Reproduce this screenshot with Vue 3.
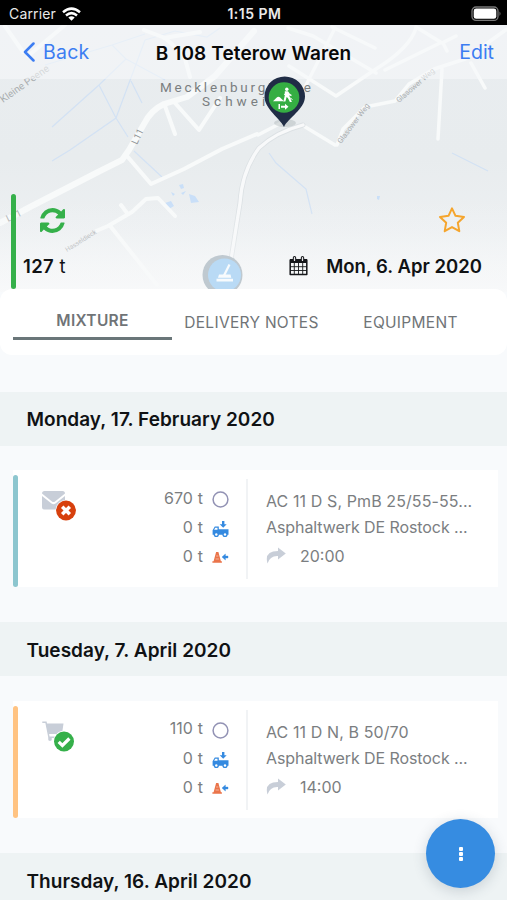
<script setup>
const days = [
  {
    title: 'Monday, 17. February 2020',
    card: { tone: 'teal', icon: 'mail', planned: '670 t', mix: 'AC 11 D S, PmB 25/55-55...', plant: 'Asphaltwerk DE Rostock ...', time: '20:00' },
  },
  {
    title: 'Tuesday, 7. April 2020',
    card: { tone: 'orange', icon: 'cart', planned: '110 t', mix: 'AC 11 D N, B 50/70', plant: 'Asphaltwerk DE Rostock ...', time: '14:00' },
  },
  { title: 'Thursday, 16. April 2020' },
]
</script>

<template>
  <div class="screen">
    <header class="status">
      <div class="carrier">
        <span>Carrier</span>
        <svg width="19" height="14" viewBox="0 0 19 14" fill="none" stroke="#fff" stroke-width="2.5">
          <path d="M1 5.2Q9.5-2 18 5.2" /><path d="M4 8.5Q9.5 3.8 15 8.5" />
          <path d="M6.3 10.6Q9.5 8 12.7 10.6L9.5 13.8Z" fill="#fff" stroke="none" />
        </svg>
      </div>
      <span class="clock">1:15 PM</span>
      <svg class="battery" width="31" height="16" viewBox="0 0 31 16">
        <rect x="1" y="1" width="26" height="13.4" rx="4" fill="none" stroke="#777" stroke-width="1.3" />
        <rect x="2.7" y="2.6" width="22.6" height="10.2" rx="2.4" fill="#fff" />
        <path d="M28.5 5.5q2 2.2 0 4.4z" fill="#777" />
      </svg>
    </header>

    <section class="hero">
      <svg class="map" width="507" height="267" viewBox="0 25 507 267">
        <defs>
          <linearGradient id="land" x1="0" y1="0" x2="0" y2="1">
            <stop offset="0" stop-color="#e9edf0" /><stop offset=".5" stop-color="#e8ecee" />
            <stop offset=".78" stop-color="#edf0f2" /><stop offset="1" stop-color="#f7f8f9" />
          </linearGradient>
          <linearGradient id="mist" x1="0" y1="0" x2="0" y2="1">
            <stop offset="0" stop-color="#f5f7f8" stop-opacity="0" /><stop offset="1" stop-color="#f8f9fa" stop-opacity=".6" />
          </linearGradient>
        </defs>
        <rect y="25" width="507" height="267" fill="url(#land)" />
        <g fill="none" stroke="#d3e2f4" stroke-width="1.200">
          <path d="M45 65L112 45L145 34M112 45L126 59L99 85L52 127M126 59L165 80M145 40L132 75L116 118L70 150L52 161M99 85L116 118L128 137M131 81L142 103M145 40L175 31L207 37L220 28" />
          <path d="M134 151L162 177M269 153L276 163L306 189L312 214M452 153L488 171" />
        </g>
        <g fill="#c9dff8">
          <path d="M165 203l6-2 3 5-5 3zM189 194l6 2 4 6-8 1zM179 185l4-1 1 4-3 1zM171 192l4 2-2 2zM181 193l5-2-3 4zM377 196l3 0-1 4-2-1z" />
        </g>
        <g fill="none" stroke="#f8fafa" stroke-linejoin="round" stroke-linecap="round">
          <path stroke-width="6" d="M0 223L30 207L100 171L122 160L129 150L144 124Q151 110 164 104L187 97L215 76L254 31" />
          <path stroke-width="4" d="M127 156L151 184L184 169L222 149L257 134M165 106L175 134M175 103L199 130L220 98M144 30L165 38L184 55L190 77M164 38L200 32M5 26L23 52M28 56L65 25" />
          <path stroke-width="4" d="M96 231L108 226L132 212L146 199L158 198L175 216M127 213L121 205M111 227L157 285" />
          <path stroke-width="3.500" d="M288 28L313 36L376 73M332 27L375 48M289 66L336 96L376 69Q410 48 416 28M385 70L440 43M416 27L442 43L456 36M443 43L447 51M337 145L343 129L365 107L395 101L409 84L434 69L465 59L507 29M442 69L438 139M471 63L485 88M258 135L281 123M302 125L335 145" />
        </g>
        <g fill="none" stroke-linecap="round">
          <path stroke="#dce1e4" stroke-width="5" d="M230 266L240 203Q242 171 259 148Q276 132 303 125" />
          <path stroke="#f8f9fa" stroke-width="3.300" d="M230 266L240 203Q242 171 259 148Q276 132 303 125M303 91L335 28" />
        </g>
        <g class="road-label">
          <text x="3" y="103" transform="rotate(-35 3 103)" font-size="10">Kleine Peene</text>
          <text x="137" y="145" transform="rotate(-65 137 145)" font-size="9.500" fill="#8e9294">L11</text>
          <text x="8" y="222" transform="rotate(-26 8 222)" font-size="9.500">L11</text>
          <text x="341" y="144" transform="rotate(-53 341 144)" font-size="7.500">Glasower Weg</text>
          <text x="399" y="103" transform="rotate(-41 399 103)" font-size="7.500">Glasower Weg</text>
          <text x="67" y="252" transform="rotate(-32 67 252)" font-size="6.500">Hasseldieck</text>
        </g>
        <rect y="200" width="507" height="92" fill="url(#mist)" />
        <g class="region"><text x="160" y="91.500" textLength="151">Mecklenburgische</text><text x="202" y="106" textLength="74">Schweiz</text></g>
        <rect y="25" width="507" height="54" fill="#f7f8fa" opacity=".58" />
        <ellipse cx="285" cy="123" rx="11" ry="4" fill="#8a9298" opacity=".28" />
        <path d="M284 127C280 118 264.500 109 264.500 96.500A20 19.800 0 0 1 305 96.500C305 109 288 118 284 127Z" fill="#202d46" />
        <circle cx="284" cy="97.500" r="15.300" fill="#35ae43" />
        <g fill="#fff">
          <path d="M273 101.300l3.500-3.600q1.700-1.500 3.400-.4l4 4z" />
          <circle cx="286.800" cy="89.300" r="1.700" />
          <path d="M284.800 91.300h3.200l1.800 2.500 2 1.200-.7 1.200-1.800-.9.600 2.300 2 4.300h-2l-2-3.800-1.300-1-1.200 4.500h-2l1.400-6z" />
          <path d="M284 94l8.500 5.500" stroke="#fff" stroke-width="1" />
          <path d="M278.500 104h1.500v5h-1.500zM281 105.700h4v-2l3.500 3-3.500 3v-2h-4z" />
        </g>
        <circle cx="222.500" cy="275" r="20" fill="#bfc9d0" />
        <circle cx="224.500" cy="275" r="16.500" fill="#b9daf5" />
        <path d="M229.500 264.500L224 275.500" stroke="#f8fbfd" stroke-width="2.200" />
        <path d="M219 274.500h11.500l.8 3.300H218zM216.500 278.800h16.500v2.700h-16.500z" fill="#f8fbfd" />
      </svg>

      <nav class="nav">
        <a class="back"><svg width="12" height="20" viewBox="0 0 12 20"><path d="M10.500 1.500L2 10l8.500 8.500" fill="none" stroke="#3c7df2" stroke-width="2.500" stroke-linecap="round" stroke-linejoin="round" /></svg><span>Back</span></a>
        <h1>B 108 Teterow Waren</h1>
        <a class="edit">Edit</a>
      </nav>

      <div class="summary">
        <div class="summary-row">
          <svg width="25" height="25" viewBox="0 0 1536 1536" fill="#35b04a"><path d="M1511 928q0 5-1 7-64 268-268 434.500T764 1536q-146 0-282.500-55T238 1324l-129 129q-19 19-45 19t-45-19T0 1408V960q0-26 19-45t45-19h448q26 0 45 19t19 45-19 45l-137 137q71 66 161 102t187 36q134 0 250-65t186-179q11-17 53-117 8-23 30-23h192q13 0 22.500 9.500t9.500 22.500zm25-800v448q0 26-19 45t-45 19h-448q-26 0-45-19t-19-45 19-45l138-138Q969 256 768 256q-134 0-250 65T332 500q-11 17-53 117-8 23-30 23H50q-13 0-22.500-9.500T18 608v-7q65-268 270-434.500T768 0q146 0 284 55.500T1297 212l130-129q19-19 45-19t45 19 19 45z" /></svg>
          <svg width="28" height="28" viewBox="0 0 28 28"><path d="M14 2.300l3.500 7.500 8.500 1.100-6.200 5.800 1.500 8.500-7.300-4.100-7.300 4.100 1.500-8.500L2 10.900l8.500-1.100z" fill="none" stroke="#f5a52d" stroke-width="2" stroke-linejoin="round" /></svg>
        </div>
        <div class="summary-row facts">
          <span class="amount"><b>127</b> t</span>
          <span class="date">
            <svg width="19" height="20" viewBox="0 0 19 20"><path d="M1.200 4h16.600v14.500H1.200z" fill="none" stroke="#15171a" stroke-width="1.500" stroke-linejoin="round" /><path d="M1 3h17v4H1z" fill="#15171a" /><path d="M5.300 7v11M9.500 7v11M13.700 7v11M1 10.700h17M1 14.500h17" stroke="#15171a" stroke-width=".9" /><path d="M5.500 1.700v2.600M13.500 1.700v2.600" stroke="#15171a" stroke-width="3.400" stroke-linecap="round" /><path d="M5.500 1.700v2.700M13.500 1.700v2.700" stroke="#e8eaec" stroke-width="1.300" stroke-linecap="round" /></svg>
            <b>Mon, 6. Apr 2020</b>
          </span>
        </div>
      </div>
    </section>

    <div class="tabs">
      <span class="tab active">MIXTURE</span><span class="tab">DELIVERY NOTES</span><span class="tab">EQUIPMENT</span>
    </div>

    <main class="list">
      <section v-for="day in days" :key="day.title" class="day">
        <h2>{{ day.title }}</h2>
        <article v-if="day.card" class="card" :class="day.card.tone">
          <div class="state">
            <svg v-if="day.card.icon === 'mail'" width="38" height="34" viewBox="0 0 38 34">
              <path d="M1 3.500Q1 1 3.500 1h18Q24 1 24 3.500L14 11.500q-1.500 1-3 0z" fill="#c8ced8" />
              <path d="M1 6l9.500 7.500q2 1.500 4 0L24 6v11q0 2.500-2.500 2.500h-18Q1 19.500 1 17z" fill="#c8ced8" />
              <circle cx="25" cy="20.500" r="10.500" fill="#fff" /><circle cx="25" cy="20.500" r="9.900" fill="#d7400d" />
              <path d="M21.200 16.700l7.600 7.600M28.800 16.700l-7.600 7.600" stroke="#fff" stroke-width="3.500" />
            </svg>
            <svg v-else width="38" height="34" viewBox="0 0 38 34">
              <path d="M1.300 1.300H5l3 15h12" fill="none" stroke="#c8ced8" stroke-width="1.500" /><path d="M5 2.500h17.500L21 13H7.500z" fill="#c8ced8" />
              <circle cx="9" cy="18" r="1.900" fill="#c8ced8" />
              <circle cx="23" cy="20.500" r="10.700" fill="#fff" /><circle cx="23" cy="20.500" r="10" fill="#35b04a" />
              <path d="M17.700 20.800l3.700 3.700 7-7" fill="none" stroke="#fff" stroke-width="3.200" />
            </svg>
          </div>
          <div class="amounts">
            <div><span>{{ day.card.planned }}</span><svg class="planned-icon" width="17" height="17" viewBox="0 0 17 17"><circle cx="8.500" cy="8.500" r="7.400" fill="none" stroke="#9292b4" stroke-width="1.500" /></svg></div>
            <div><span>0 t</span><svg class="truck-icon" width="17" height="18" viewBox="0 0 17 18" fill="#358ae0"><path d="M10 1h2.400v3.200h2.300L11.200 7.800 7.700 4.200H10z" /><path d="M.6 10.300L2.800 6.500h4v2.700h9.700v5.600H.6z" /><path d="M3.300 7.700h2.200v2H2.100z" fill="#fff" /><circle cx="4.300" cy="14.500" r="2.600" /><circle cx="13" cy="14.500" r="2.600" /><circle cx="4.300" cy="14.500" r="1.200" fill="#fff" /><circle cx="13" cy="14.500" r="1.200" fill="#fff" /></svg></div>
            <div><span>0 t</span><svg class="cone-icon" width="17" height="14" viewBox="0 0 17 14"><path d="M4.100 1h2.300l2.500 9.200h1v1.500H.4v-1.500h1.200z" fill="#ea744a" /><path d="M4.200 5h2.100M3.600 8h3.300" stroke="#f6bda6" stroke-width=".9" /><path d="M10 6l3.400-3v2.100H16v1.900h-2.600v2z" fill="#358ae0" stroke="#358ae0" stroke-width=".4" /></svg></div>
          </div>
          <div class="details">
            <p class="mix">{{ day.card.mix }}</p>
            <p class="plant">{{ day.card.plant }}</p>
            <p class="time"><svg width="20" height="18" viewBox="0 0 20 18"><path d="M12 .5L19.800 6.500 12 12.500V9Q4 8.500 1.500 16.500Q-2 4 12 4z" fill="#c8ced8" /></svg><span>{{ day.card.time }}</span></p>
          </div>
        </article>
      </section>
    </main>

    <button class="fab" aria-label="More"><i></i><i></i><i></i></button>
  </div>
</template>

<style>
body { margin: 0; overflow: hidden; }
</style>

<style scoped>
* { box-sizing: border-box; }
.screen { position: relative; display: flex; flex-direction: column; width: 507px; height: 900px; overflow: hidden; background: #f8fafc; font-family: Inter, "Liberation Sans", sans-serif; color: #101214; }
.status { display: grid; grid-template-columns: 1fr auto 1fr; align-items: center; flex: 0 0 25px; padding: 2px 7px 0 9px; background: #000; color: #e9e9e9; font-size: 14px; }
.carrier { display: flex; align-items: center; gap: 6px; letter-spacing: .15px; }
.clock { font-weight: 600; font-size: 14px; letter-spacing: .5px; }
.battery { justify-self: end; margin-right: -2px; }
.hero { position: relative; display: flex; flex-direction: column; justify-content: space-between; flex: 0 0 264px; }
.map { position: absolute; top: 0; left: 0; }
.road-label { fill: #a8acae; font-family: Roboto, sans-serif; }
.region { fill: #7a7e80; font-family: Roboto, sans-serif; font-size: 13.500px; }
.nav { position: relative; display: grid; grid-template-columns: 1fr auto 1fr; align-items: center; height: 54px; padding: 0 13px; }
.nav h1 { margin: 0; padding-top: 2px; font-size: 19px; font-weight: 600; letter-spacing: .12px; color: #080808; }
.back, .edit { color: #3c7df2; font-size: 19.500px; }
.back { display: flex; align-items: center; gap: 8px; padding-left: 10px; letter-spacing: .25px; }
.edit { justify-self: end; }
.summary { position: relative; display: flex; flex-direction: column; gap: 19px; height: 95px; margin-left: 11px; padding: 12px 24px 0 12px; }
.summary::before { content: ""; position: absolute; left: 0; top: 0; bottom: 0; width: 5px; border-radius: 3px; background: #35b04a; }
.summary-row { display: flex; justify-content: space-between; align-items: center; height: 28px; padding: 0 17px 0 17px; }
.facts { height: 25px; padding: 0 1px 0 0; font-size: 18.500px; }
.facts b { font-weight: 600; }
.amount { letter-spacing: .35px; }
.date { display: flex; align-items: center; gap: 18px; }
.tabs { position: relative; display: grid; grid-template-columns: 159px 159px 159px; flex: 0 0 66px; padding: 12px 13px 15px; border-radius: 12px; background: #fff; }
.tab { display: flex; align-items: center; justify-content: center; padding-top: 3px; color: #707477; font-size: 15.500px; letter-spacing: .3px; white-space: nowrap; }
.tab.active { padding-top: 2px; border-bottom: 3px solid #6a7679; font-weight: 600; }
.list { margin-top: 36.700px; }
.day { height: 230.700px; }
.day h2 { display: flex; align-items: center; height: 54px; margin: 0 0 24.500px; padding: 2px 0 0 26.500px; background: #eef3f4; font-size: 19px; font-weight: 600; letter-spacing: .04px; }
.card { position: relative; display: grid; grid-template-columns: 92px 143px 1fr; height: 117px; margin: 0 9px 0 13px; background: #fff; color: #7b7e81; font-size: 16px; }
.card::before { content: ""; position: absolute; left: 0; top: 5px; bottom: 0; width: 5px; border-radius: 3px; background: #8dc6cf; }
.orange::before { background: #ffc382; }
.state { padding: 20px 0 0 28px; }
.amounts { display: flex; flex-direction: column; margin: 9px 0 8px; padding: 4px 17px 0 0; border-right: 2px solid #f1f3f5; }
.amounts div { display: flex; align-items: center; justify-content: flex-end; gap: 9px; height: 29.200px; letter-spacing: .1px; }
.planned-icon, .truck-icon, .cone-icon { margin-top: 4px; }
.details { padding: 18px 0 0 18px; white-space: nowrap; }
.details p { height: 26px; margin: 0; line-height: 26px; }
.details .mix { letter-spacing: .1px; }
.details .plant { letter-spacing: -.08px; }
.details .time { display: flex; align-items: center; gap: 14px; height: 32px; }
.fab { position: absolute; right: 12px; bottom: 12px; display: flex; flex-direction: column; align-items: center; justify-content: center; gap: 1px; width: 69px; height: 69px; padding: 0; border: 0; border-radius: 50%; background: #368ce1; box-shadow: 0 3px 14px rgba(50, 70, 90, .2); }
.fab i { width: 4px; height: 4px; border-radius: 1px; background: #fff; }
</style>
